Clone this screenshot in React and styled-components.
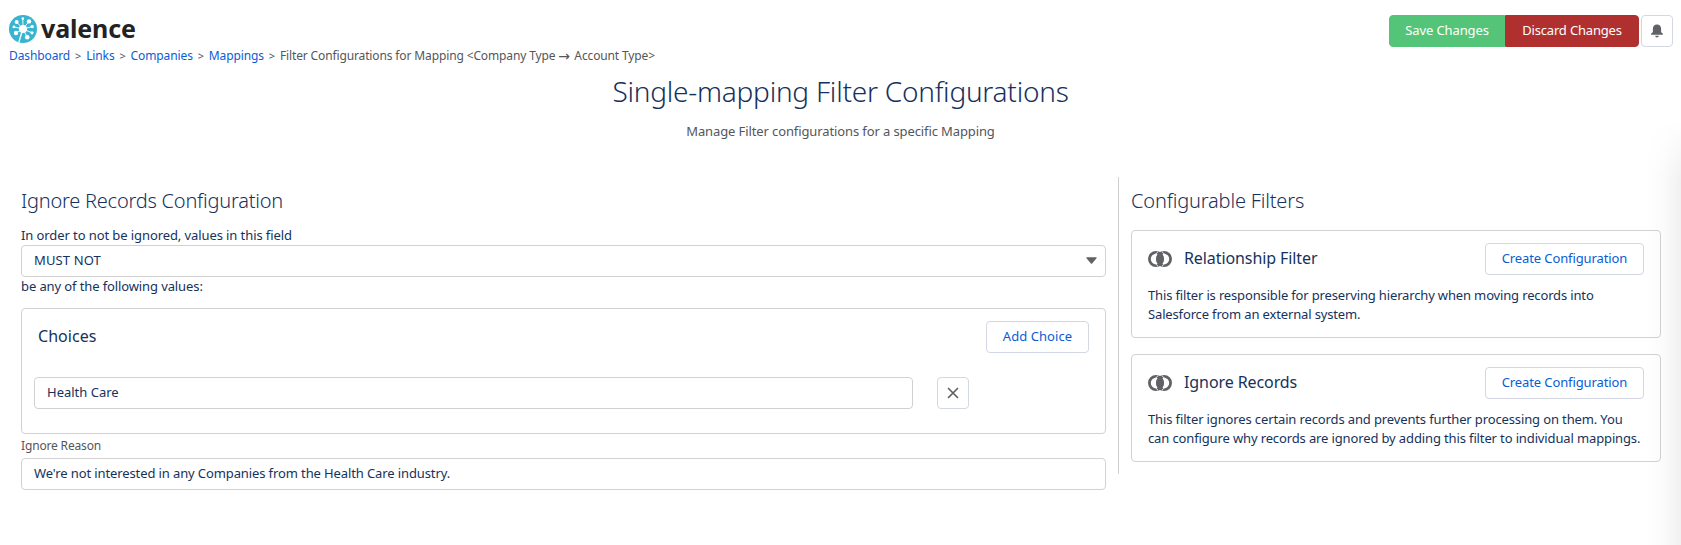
import React from "react";
import styled, { createGlobalStyle, css } from "styled-components";

const Global = createGlobalStyle`
  *, *::before, *::after { box-sizing: border-box; }
  html, body { margin: 0; background: #fff; }
  body {
    height: 545px;
    overflow: hidden;
    font-family: "Noto Sans", sans-serif;
    font-size: 13px;
    line-height: 19.5px;
    color: #16325c;
  }
  h1, h2, h3, p { margin: 0; font-weight: 400; }
  button, input { font: inherit; }
  svg { display: block; flex: none; }
`;

const track = css`
  letter-spacing: ${(p) => (p.$track === undefined ? -0.11 : p.$track)}px;
  white-space: nowrap;
`;

const Page = styled.div`
  position: relative;
  height: 545px;
  display: flex;
  flex-direction: column;
`;
const EdgeShade = styled.div`
  position: absolute;
  top: 120px;
  right: 0;
  bottom: 0;
  width: 36px;
  background: linear-gradient(to right, rgba(0, 0, 0, 0), rgba(0, 0, 0, 0.015) 50%, rgba(0, 0, 0, 0.055));
  mask-image: linear-gradient(to bottom, transparent, #000 60px);
  pointer-events: none;
`;
const Header = styled.header`
  display: flex;
  justify-content: space-between;
  align-items: flex-start;
  height: 68px;
  padding: 15px 8px 0 9px;
`;
const Brand = styled.div`
  display: flex;
  align-items: center;
  height: 28px;
  gap: 4px;
`;
const Wordmark = styled.span`
  font-size: 25px;
  font-weight: 700;
  line-height: 28px;
  color: #232323;
  padding-bottom: 3px;
  ${track}
`;
const Crumbs = styled.nav`
  display: flex;
  margin-top: 4px;
  font-size: 12px;
  line-height: 18px;
  color: #54565b;
`;
const Crumb = styled.a`
  color: #0b5cd5;
  ${track}
`;
const Separator = styled.span`
  width: 16px;
  text-align: center;
  font-size: 11px;
`;
const Current = styled.span`
  display: flex;
  white-space: pre;
  letter-spacing: -0.13px;
`;
const Arrow = styled.span`
  width: 13px;
  font-family: "DejaVu Sans", sans-serif;
  font-size: 14px;
`;
const Actions = styled.div`display: flex;`;
const Button = styled.button`
  display: flex;
  align-items: center;
  justify-content: center;
  width: ${(p) => p.$w}px;
  height: 32px;
  padding: 0;
  border: 1px solid #d3d7e3;
  border-radius: 4px;
  background: #fff;
  color: #0b5cd5;
  ${track}
`;
const SaveButton = styled(Button)`
  border-color: #54c578;
  border-radius: 4px 0 0 4px;
  background: #54c578;
  color: #fff;
`;
const DiscardButton = styled(Button)`
  margin-right: 2px;
  border-color: #b03030;
  border-radius: 0 4px 4px 0;
  background: #b03030;
  color: #fff;
`;
const Hero = styled.div`
  display: flex;
  flex-direction: column;
  align-items: center;
  height: 109px;
  padding-top: 5px;
`;
const Title = styled.h1`
  font-size: 28px;
  font-weight: 300;
  line-height: 36px;
  ${track}
`;
const Subtitle = styled.p`
  margin-top: 13px;
  color: #54565b;
  ${track}
`;
const Columns = styled.main`display: flex; align-items: flex-start;`;
const ConfigColumn = styled.section`
  display: flex;
  flex-direction: column;
  flex: none;
  width: 1118px;
  padding: 9px 12px 0 21px;
`;
const FilterColumn = styled.aside`
  display: flex;
  flex-direction: column;
  flex: 1;
  min-width: 0;
  height: 297px;
  padding: 9px 20px 0 12px;
  border-left: 1px solid #d0d0d0;
`;
const SectionTitle = styled.h2`
  flex: none;
  height: 44px;
  font-size: 20px;
  font-weight: 300;
  line-height: 30px;
  ${track}
`;
const Line = styled.p`
  height: ${(p) => p.$h}px;
  line-height: 19px;
  ${track}
`;
const LeadLine = styled(Line)`
  margin-top: -4px;
`;
const Field = styled.div`
  display: flex;
  align-items: center;
  justify-content: space-between;
  width: ${(p) => (p.$w ? p.$w + "px" : "100%")};
  height: 32px;
  padding: 0 8px 1px 12px;
  border: 1px solid #d2d2d2;
  border-radius: 4px;
  background: #fff;
  ${track}
`;
const Choices = styled.div`
  height: 126px;
  margin-bottom: 3px;
  padding: 12px;
  border: 1px solid #d2d2d2;
  border-radius: 4px;
`;
const CardHead = styled.div`
  display: flex;
  align-items: center;
  justify-content: space-between;
  padding: 0 4px;
`;
const CardTitle = styled.h3`
  display: flex;
  align-items: center;
  gap: 12px;
  font-size: 16px;
  ${track}
`;
const ChoiceRow = styled.div`display: flex; gap: 24px; margin-top: 24px;`;
const Label = styled.label`
  height: 21px;
  font-size: 12px;
  line-height: 18px;
  color: #54565b;
  ${track}
`;
const FilterCard = styled.article`
  flex: none;
  height: 108px;
  padding: 12px;
  border: 1px solid #d2d2d2;
  border-radius: 4px;
  & + & { margin-top: 16px; }
`;
const Description = styled.div`
  display: flex;
  flex-direction: column;
  margin: 11px 4px 0;
  line-height: 19px;
`;
const DescLine = styled.span`${track}`;

const petals = [
  [13.8, 3.6, 1.3], [7.6, 6.9, 2], [20, 6.4, 2.2], [4.9, 11.9, 1.4],
  [7, 18, 2.2], [18.2, 22.2, 2.3], [23, 17.8, 1.6], [23.2, 11.6, 1.7],
];
const Logo = () => (
  <svg width="28" height="28" viewBox="0 0 28 28">
    <circle cx="14" cy="14" r="14" fill="#38b3d0" />
    <g fill="#fff" stroke="#fff">
      {petals.map(([x, y, r]) => (
        <g key={x + "-" + y}>
          <circle cx={x} cy={y} r={r} stroke="none" />
          <line x1="14" y1="14" x2={x} y2={y} strokeWidth="0.9" />
        </g>
      ))}
      <line x1="13.5" y1="15" x2="9.8" y2="27.4" strokeWidth="1.4" />
      <circle cx="14" cy="14" r="4" stroke="none" />
    </g>
  </svg>
);
const Bell = () => (
  <svg width="14" height="14" viewBox="0 0 14 14" fill="#606266">
    <path d="M7 .5C4.4.5 2.9 2.4 2.9 4.8v2.4c0 1-.6 1.5-1.4 2.1-.7.5-.8 1.4.1 1.4h10.8c.9 0 .8-.9.1-1.4-.8-.6-1.4-1.1-1.4-2.1V4.8C11.1 2.4 9.6.5 7 .5zM5.2 11.8h3.6c0 1-.8 1.700-1.800 1.700s-1.800-.7-1.800-1.700z" />
  </svg>
);
const Rings = () => (
  <svg width="24" height="16" viewBox="0 0 24 16">
    <g fill="none" stroke="#606266" strokeWidth="2.8">
      <circle cx="8" cy="8" r="6.6" />
      <circle cx="16" cy="8" r="6.6" />
    </g>
    <path d="M10.200.7a8.500 8.500 0 0 0 0 14.600M13.800.7a8.500 8.500 0 0 1 0 14.600" fill="none" stroke="#fff" strokeWidth=".9" />
    <path d="M12 1.200a8 8 0 0 1 0 13.600 8 8 0 0 1 0-13.600z" fill="#606266" />
  </svg>
);
const Caret = () => (
  <svg width="11" height="7" viewBox="0 0 11 7"><path d="M.9.3h9.200c.5 0 .7.5.4.9L6.100 6.400c-.3.4-.9.4-1.200 0L.5 1.200C.2.8.4.3.9.3z" fill="#606266" /></svg>
);
const Cross = () => (
  <svg width="12" height="12" viewBox="0 0 12 12"><path d="M1.500 1.500l9 9M10.500 1.500l-9 9" stroke="#606266" strokeWidth="1.700" strokeLinecap="round" /></svg>
);

const crumbs = ["Dashboard", "Links", "Companies", "Mappings"];
const filters = [
  { name: "Relationship Filter", track: -0.15, lines: ["This filter is responsible for preserving hierarchy when moving records into", "Salesforce from an external system."] },
  { name: "Ignore Records", track: -0.13, lines: ["This filter ignores certain records and prevents further processing on them. You", "can configure why records are ignored by adding this filter to individual mappings."] },
];

export default function App() {
  return (
    <Page>
      <Global />
      <Header>
        <div>
          <Brand><Logo /><Wordmark $track={-0.15}>valence</Wordmark></Brand>
          <Crumbs>
            {crumbs.map((c) => (
              <React.Fragment key={c}><Crumb>{c}</Crumb><Separator>&gt;</Separator></React.Fragment>
            ))}
            <Current>
              {"Filter Configurations for Mapping <Company Type "}<Arrow>→</Arrow>{" Account Type>"}
            </Current>
          </Crumbs>
        </div>
        <Actions>
          <SaveButton $w={116}>Save Changes</SaveButton>
          <DiscardButton $w={134} $track={-0.18}>Discard Changes</DiscardButton>
          <Button $w={32} aria-label="Notifications"><Bell /></Button>
        </Actions>
      </Header>
      <Hero>
        <Title $track={-0.24}>Single-mapping Filter Configurations</Title>
        <Subtitle>Manage Filter configurations for a specific Mapping</Subtitle>
      </Hero>
      <Columns>
        <ConfigColumn>
          <SectionTitle $track={-0.23}>Ignore Records Configuration</SectionTitle>
          <LeadLine $h={19} $track={-0.09}>In order to not be ignored, values in this field</LeadLine>
          <Field $track={0.12}>MUST NOT<Caret /></Field>
          <Line $h={31}>be any of the following values:</Line>
          <Choices>
            <CardHead>
              <CardTitle $track={0.05}>Choices</CardTitle>
              <Button $w={103} $track={0.06}>Add Choice</Button>
            </CardHead>
            <ChoiceRow>
              <Field $w={879} $track={0}>Health Care</Field>
              <Button $w={32} aria-label="Remove"><Cross /></Button>
            </ChoiceRow>
          </Choices>
          <Label $track={-0.16}>Ignore Reason</Label>
          <Field>We're not interested in any Companies from the Health Care industry.</Field>
        </ConfigColumn>
        <FilterColumn>
          <SectionTitle $track={-0.17}>Configurable Filters</SectionTitle>
          {filters.map((f) => (
            <FilterCard key={f.name}>
              <CardHead>
                <CardTitle $track={-0.09}><Rings />{f.name}</CardTitle>
                <Button $w={159}>Create Configuration</Button>
              </CardHead>
              <Description>{f.lines.map((l) => <DescLine key={l} $track={f.track}>{l}</DescLine>)}</Description>
            </FilterCard>
          ))}
        </FilterColumn>
      </Columns>
      <EdgeShade />
    </Page>
  );
}
